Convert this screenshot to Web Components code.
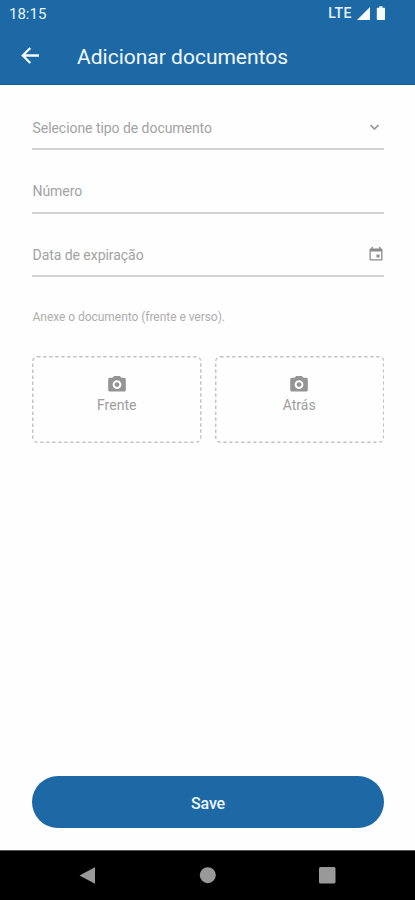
<!DOCTYPE html>
<html lang="pt">
<head>
<meta charset="utf-8">
<title>Adicionar documentos</title>
<style>
html, body { margin: 0; height: 100%; background: #fefefe; }
body { font-family: Roboto, "Liberation Sans", sans-serif; overflow: hidden; }
</style>
</head>
<body>
<document-screen></document-screen>
<script>
function define(name, html) {
  customElements.define(name, class extends HTMLElement {
    constructor() {
      super();
      const t = document.createElement('template');
      t.innerHTML = html;
      this.attachShadow({ mode: 'open' }).append(t.content.cloneNode(true));
    }
  });
}

define('status-bar', `
<style>
:host { display: flex; align-items: center; height: 27px; padding: 0 28px 0 9px; color: #e9f4ff; font-size: 15px; line-height: 27px; }
.time { flex: 1; padding-top: 2px; }
.lte { font-size: 14px; letter-spacing: .5px; font-weight: 500; margin-right: 4px; }
svg { display: block; }
</style>
<span class="time">18:15</span><span class="lte">LTE</span>
<svg width="31" height="16" viewBox="0 0 31 16" fill="#f4faff"><path d="M1 14 14 1v13z"/><path d="M20.800 2.500q0-.8.8-.8h1.700V.3h3.200v1.400h1.700q.8 0 .8.8v10.700q0 .8-.8.8h-6.600q-.8 0-.8-.8z"/></svg>`);

define('app-bar', `
<style>
:host { display: flex; align-items: center; height: 57px; padding-left: 21px; color: #f1f7ff; }
h1 { margin: 3px 0 0 37px; font-size: 21px; font-weight: 400; line-height: 30px; white-space: nowrap; }
svg { display: block; }
</style>
<svg width="19" height="18" viewBox="0 0 19 18" fill="none" stroke="#f5faff" stroke-width="2.300"><path d="M18 8.500H2.500M9.300 1 1.800 8.500l7.500 7.500"/></svg>
<h1><slot></slot></h1>`);

define('form-field', `
<style>
:host { display: flex; align-items: center; box-sizing: border-box; height: 63.330px; padding-top: 20.500px; color: #a2a2a2; font-size: 14px; line-height: 20px; letter-spacing: -.05px; position: relative; }
.label { flex: 1; white-space: nowrap; padding-left: .5px; }
.line { position: absolute; left: 0; bottom: -1px; width: 100%; height: 2px; display: block; }
</style>
<span class="label"><slot></slot></span><slot name="icon"></slot>
<svg class="line"><rect y=".2" width="100%" height="1.600" fill="#c8c8c8"/></svg>`);

define('chevron-icon', `
<style>:host { display: block; margin-right: 4px; } svg { display: block; }</style>
<svg width="11" height="7" viewBox="0 0 11 7" fill="none" stroke="#969696" stroke-width="1.700"><path d="m1.500 1 4 4 4-4"/></svg>`);

define('calendar-icon', `
<style>:host { display: block; margin-right: 1px; } svg { display: block; }</style>
<svg width="14" height="15" viewBox="0 0 14 15"><path fill="#8c8c8c" fill-rule="evenodd" d="M2.500 0H4v1.500h6V0h1.500v1.500h1q1 0 1 1V12.500q0 1-1 1h-11q-1 0-1-1V2.500q0-1 1-1h1zM1.800 4.500v7.700h10.400V4.500z"/><path fill="#8c8c8c" d="M7.500 7.500h3v3h-3z"/></svg>`);

define('upload-box', `
<style>
:host { display: block; flex: 1; height: 87px; color: #9d9d9d; position: relative; }
.frame { position: absolute; inset: 0; width: 100%; height: 100%; }
.content { display: flex; flex-direction: column; align-items: center; padding-top: 20px; font-size: 14px; line-height: 20px; letter-spacing: .05px; }
.content svg { display: block; margin-bottom: 3px; }
</style>
<svg class="frame"><rect x=".75" y=".75" width="168" height="85.500" rx="4.500" fill="none" stroke="#c2c2c2" stroke-width="1.400" stroke-dasharray="3.300 2.700"/></svg>
<div class="content">
<svg width="18" height="16" viewBox="0 0 18 16"><path fill="#949494" fill-rule="evenodd" d="M6.200 0h5.600l1.600 1.800h2.800q1.600 0 1.600 1.600v10.500q0 1.600-1.600 1.600H1.800Q.2 15.500.2 13.900V3.400q0-1.600 1.600-1.600h2.800zM9 4.200a4.400 4.400 0 1 0 0 8.800 4.400 4.400 0 0 0 0-8.800"/><circle cx="9" cy="8.600" r="2.400" fill="#949494"/></svg>
<span><slot></slot></span></div>`);

define('save-button', `
<style>
:host { display: block; }
button { display: block; width: 100%; height: 52px; border: 0; border-radius: 26px; background: #1c69a5; color: #edf6ff; font: 500 16px/54px Roboto, sans-serif; letter-spacing: -.1px; padding: 1px 0 0; }
</style>
<button><slot></slot></button>`);

define('navigation-bar', `
<style>
:host { display: flex; height: 50px; box-sizing: border-box; border-top: 1px solid #555; background: #000; align-items: center; padding: 0 79px; justify-content: space-between; }
svg { display: block; }
</style>
<svg width="17" height="18" viewBox="0 0 17 18"><path fill="#999" d="M.5 8.500 16 .3v16.400z"/></svg>
<svg width="17" height="17" viewBox="0 0 17 17"><circle cx="8.800" cy="8.200" r="8" fill="#999"/></svg>
<svg width="17" height="17" viewBox="0 0 17 17"><rect width="16.500" height="16.500" rx="1.500" fill="#999"/></svg>`);

define('document-screen', `
<style>
:host { display: flex; flex-direction: column; height: 900px; }
header { height: 85px; box-sizing: border-box; background: #1c69a5; border-bottom: 1px solid #165d98; }
main { flex: 1; display: flex; flex-direction: column; padding: 1px 31px 22px 32px; }
p { margin: 32px 0 0 .5px; font-size: 12px; line-height: 18px; color: #adadad; letter-spacing: -.04px; }
.uploads { display: flex; gap: 13px; margin-top: 30px; }
save-button { margin-top: auto; }
</style>
<header><status-bar></status-bar><app-bar>Adicionar documentos</app-bar></header>
<main>
<form-field>Selecione tipo de documento<chevron-icon slot="icon"></chevron-icon></form-field>
<form-field>Número</form-field>
<form-field>Data de expiração<calendar-icon slot="icon"></calendar-icon></form-field>
<p>Anexe o documento (frente e verso).</p>
<div class="uploads"><upload-box>Frente</upload-box><upload-box>Atrás</upload-box></div>
<save-button>Save</save-button>
</main>
<navigation-bar></navigation-bar>`);
</script>
</body>
</html>
